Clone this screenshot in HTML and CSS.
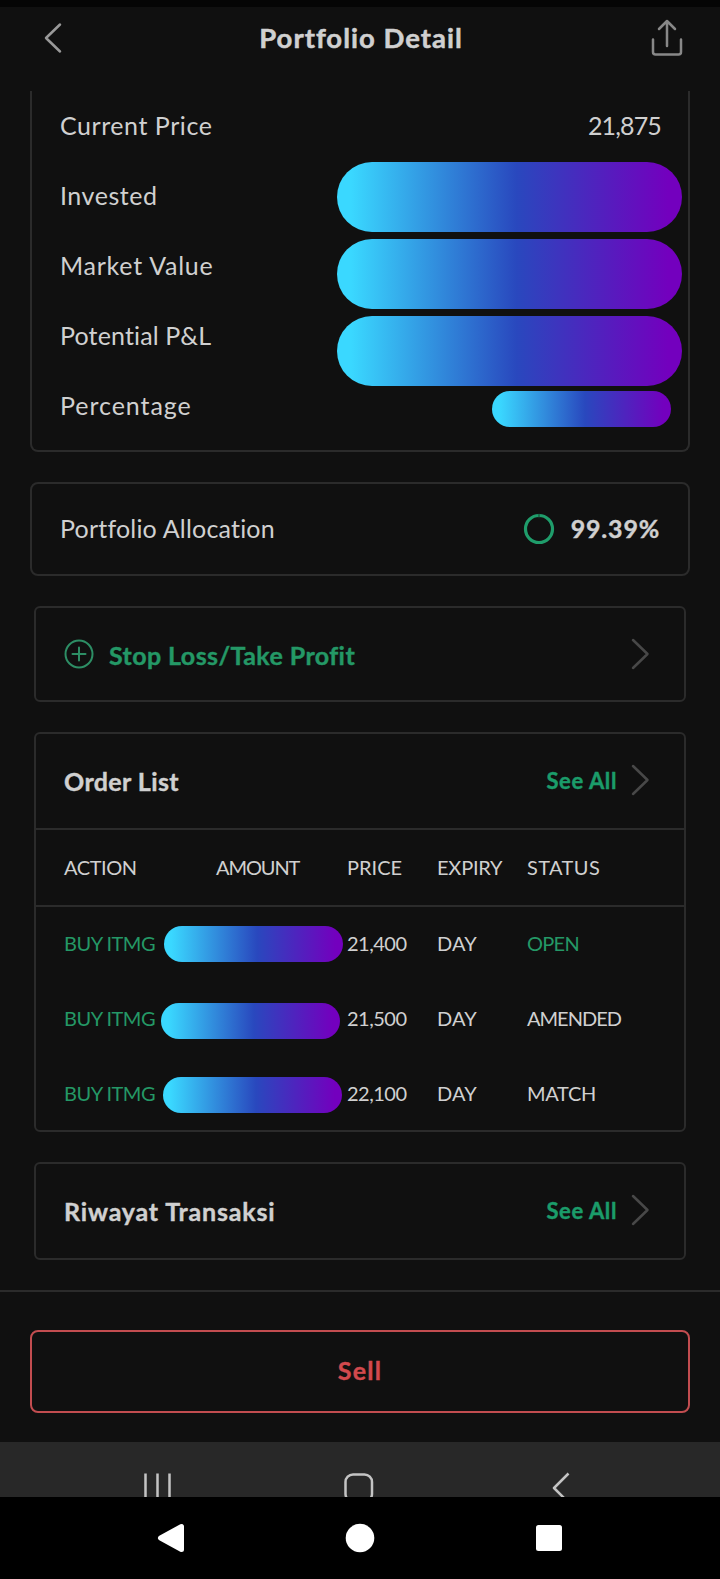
FILE: index.html
```html
<!DOCTYPE html>
<html lang="id">
<head>
<meta charset="utf-8">
<title>Portfolio Detail</title>
<link rel="stylesheet" href="styles.css">
</head>
<body>
<div class="status-strip"></div>
<header class="header">
  <svg class="back" width="20" height="32" viewBox="0 0 20 32"><path d="M17 2.500 3 16l14 13.500"/></svg>
  <h1 class="title"><span class="t-title">Portfolio Detail</span></h1>
  <svg class="share" width="32" height="38" viewBox="0 0 32 38"><path d="M16 27V2.500M8 10l8-8 8 8M2 20.500V33q0 2.500 2.500 2.500h23q2.500 0 2.500-2.500V20.500"/></svg>
</header>
<main class="content">
  <section class="card summary">
    <div class="labels">
      <div class="label"><span class="t-current">Current Price</span></div>
      <div class="label"><span class="t-invested">Invested</span></div>
      <div class="label"><span class="t-market">Market Value</span></div>
      <div class="label"><span class="t-potential">Potential P&amp;L</span></div>
      <div class="label"><span class="t-percentage">Percentage</span></div>
    </div>
    <div class="values">
      <div class="price"><span class="t-price">21,875</span></div>
      <div class="pill large"></div>
      <div class="pill large"></div>
      <div class="pill large"></div>
      <div class="pill small"></div>
    </div>
  </section>
  <section class="card allocation">
    <span class="label-text t-allocation">Portfolio Allocation</span>
    <svg class="ring" width="32" height="32" viewBox="0 0 32 32"><circle cx="16" cy="16" r="13.500"/><path d="M16 1v4"/></svg>
    <span class="strong t-alloc-value">99.39%</span>
  </section>
  <section class="card narrow stop">
    <svg class="plus" width="30" height="30" viewBox="0 0 30 30"><circle cx="15" cy="15" r="13.500"/><path d="M15 8.500v13M8.500 15h13"/></svg>
    <span class="strong green grow"><span class="t-stop">Stop Loss/Take Profit</span></span>
    <svg class="chevron" width="20" height="32" viewBox="0 0 20 32"><path d="M2 2l14.500 14L2 30"/></svg>
  </section>
  <section class="card narrow orders">
    <div class="card-head">
      <span class="strong grow"><span class="t-orders">Order List</span></span>
      <span class="see-all">See All</span>
      <svg class="chevron" width="20" height="32" viewBox="0 0 20 32"><path d="M2 2l14.500 14L2 30"/></svg>
    </div>
    <div class="row columns">
      <span class="c-action">ACTION</span><span class="c-amount">AMOUNT</span><span class="c-price">PRICE</span><span class="c-expiry">EXPIRY</span><span class="c-status">STATUS</span>
    </div>
    <div class="rows">
      <div class="row"><span class="green c-buy">BUY ITMG</span><div class="pill small first"></div><span class="c-num">21,400</span><span class="c-day">DAY</span><span class="green c-open">OPEN</span></div>
      <div class="row"><span class="green c-buy">BUY ITMG</span><div class="pill small second"></div><span class="c-num">21,500</span><span class="c-day">DAY</span><span class="c-amended">AMENDED</span></div>
      <div class="row"><span class="green c-buy">BUY ITMG</span><div class="pill small third"></div><span class="c-num">22,100</span><span class="c-day">DAY</span><span class="c-match">MATCH</span></div>
    </div>
  </section>
  <section class="card narrow history">
    <div class="card-head">
      <span class="strong grow"><span class="t-history">Riwayat Transaksi</span></span>
      <span class="see-all">See All</span>
      <svg class="chevron" width="20" height="32" viewBox="0 0 20 32"><path d="M2 2l14.500 14L2 30"/></svg>
    </div>
  </section>
</main>
<footer class="actions">
  <button class="sell"><span class="t-sell">Sell</span></button>
</footer>
<svg class="app-nav" width="720" height="55" viewBox="0 0 720 55">
  <path d="M145.500 31.500v30M157.500 31.500v30M169.500 31.500v30"/>
  <rect x="345.500" y="32.500" width="26.500" height="27" rx="7.500"/>
  <path d="M568.500 31.500 554 46l14 14"/>
</svg>
<svg class="system-nav" width="720" height="82" viewBox="0 0 720 82">
  <path stroke="#fff" stroke-width="5" stroke-linejoin="round" d="M160.500 41 181.500 29.500V52.500Z"/>
  <circle cx="360" cy="41" r="14.300"/>
  <rect x="536" y="28" width="26" height="26" rx="2.500"/>
</svg>
</body>
</html>
```
FILE: styles.css
```css
* { box-sizing: border-box; }
body { margin: 0; width: 720px; height: 1579px; overflow: hidden; background: #101010; color: #d0d0d0; font-family: Lato, "Open Sans", sans-serif; font-size: 25px; font-variant-ligatures: none; display: flex; flex-direction: column; }
svg { display: block; flex: none; fill: none; stroke-linecap: round; stroke-linejoin: round; }
span { white-space: nowrap; }
.status-strip { height: 7px; background: #050505; flex: none; }
.header { height: 84px; flex: none; display: flex; align-items: flex-start; justify-content: space-between; padding: 0 37px 0 43px; }
.back { margin-top: 15px; stroke: #999; stroke-width: 2.5; }
.share { margin-top: 12px; stroke: #888; stroke-width: 2.5; }
.title { margin: 0; padding-left: 8px; font-size: 27.5px; line-height: 62px; font-weight: 700; letter-spacing: 1px; -webkit-text-stroke: .5px; }
.content { flex: none; height: 1199px; padding: 0 30px; display: flex; flex-direction: column; }
.card { border: 2px solid #2b2b2b; border-radius: 8px; flex: none; }
.summary { height: 361px; border-top: 0; border-radius: 0 0 8px 8px; display: flex; justify-content: space-between; padding: 0 6px 0 28px; }
.label { height: 70px; line-height: 69px; }
.t-current { letter-spacing: .55px; }
.t-invested { letter-spacing: .55px; }
.t-market { letter-spacing: .75px; }
.t-potential { letter-spacing: .15px; }
.t-percentage { letter-spacing: .95px; }
.t-allocation { letter-spacing: .2px; }
.values { display: flex; flex-direction: column; align-items: flex-end; }
.price { height: 71px; line-height: 69px; padding-right: 21px; letter-spacing: -.85px; }
.pill { background: linear-gradient(90deg, #3ad8ff 4%, #2948be 52%, #7300be 96%); border-radius: 40px; flex: none; }
.large { width: 345px; height: 70px; margin-bottom: 7px; }
.small { width: 179px; height: 36px; }
.values .small { margin: -2px 11px 0 0; }
.allocation { height: 94px; margin-top: 30px; padding: 0 28px; display: flex; align-items: center; }
.label-text { flex: 1; line-height: 86px; padding-bottom: 2px; }
.ring { margin-right: 16px; stroke: #1f9d6b; stroke-width: 3.2; }
.ring path { stroke: #17402f; stroke-width: 1; }
.strong { font-weight: 700; -webkit-text-stroke: .4px; }
.t-alloc-value { letter-spacing: .8px; padding-bottom: 2px; }
.green { color: #249866; }
.grow { flex: 1; }
.narrow { margin: 30px 4px 0; border-radius: 6px; }
.stop { height: 96px; display: flex; align-items: center; padding: 0 33px 0 28px; }
.stop .strong { padding-top: 2px; }
.t-stop { letter-spacing: .42px; }
.t-orders { letter-spacing: .4px; }
.t-history { letter-spacing: .83px; }
.plus { stroke: #2d8e65; stroke-width: 2; margin-right: 15px; }
.chevron { stroke: #484848; stroke-width: 2.5; }
.orders { height: 400px; }
.card-head { height: 94px; display: flex; align-items: center; padding: 0 33px 0 28px; }
.card-head .chevron { margin-bottom: 2px; }
.see-all { color: #1b9c6a; font-size: 22px; font-weight: 700; letter-spacing: .6px; margin-right: 14px; padding-bottom: 2px; -webkit-text-stroke: .4px; }
.row { height: 75px; display: grid; grid-template-columns: 98px 185px 90px 90px 1fr; align-items: center; padding-left: 28px; font-size: 20px; }
.row span { padding-bottom: 2px; }
.columns { height: 79px; border: solid #2b2b2b; border-width: 2px 0; }
.rows { margin-top: -1px; }
.c-action { letter-spacing: -.45px; }
.c-amount { padding-left: 54px; letter-spacing: -1.1px; }
.c-expiry { letter-spacing: -.2px; }
.c-status { letter-spacing: .4px; }
.c-buy { letter-spacing: -.5px; }
.c-num { letter-spacing: -.5px; }
.c-day { letter-spacing: .2px; }
.c-open { letter-spacing: -.7px; }
.c-amended { letter-spacing: -1px; }
.c-match { letter-spacing: -.3px; }
.first { margin-left: 2px; }
.second { margin: 5px 0 0 -1px; }
.third { margin: 3px 0 0 1px; }
.history { height: 98px; }
.actions { height: 152px; flex: none; border-top: 2px solid #2b2b2b; padding: 38px 30px 0; }
.sell { display: block; width: 660px; height: 83px; padding: 0 0 4px; border: 2px solid #c24d50; border-radius: 8px; background: none; color: #d2494d; font: 700 25px Lato, sans-serif; letter-spacing: 1.2px; -webkit-text-stroke: .4px; }
.app-nav { background: #282828; stroke: #c4c4c4; stroke-width: 2.5; stroke-linecap: butt; }
.system-nav { background: #000; fill: #fff; }
```
